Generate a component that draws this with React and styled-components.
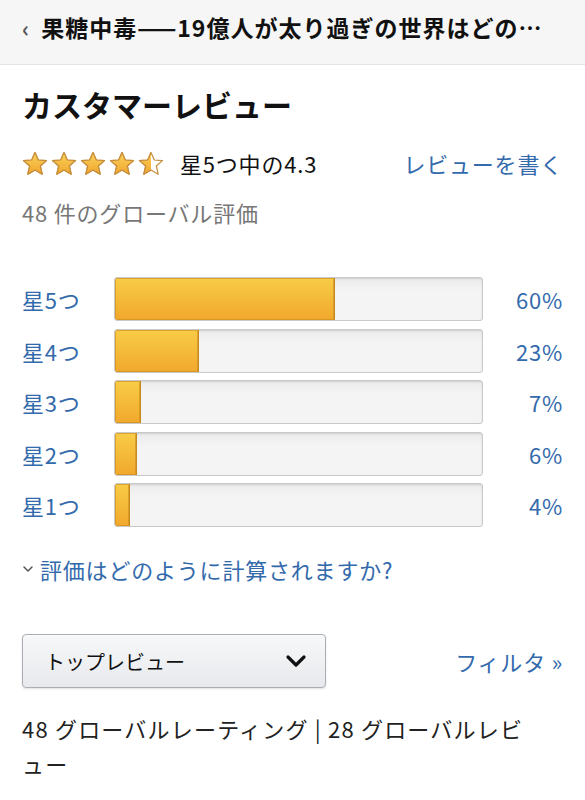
import React from 'react';
import styled, { createGlobalStyle } from 'styled-components';

const GlobalStyle = createGlobalStyle`
  html, body {
    margin: 0;
    padding: 0;
    background: #fff;
  }
  body {
    font-family: 'Noto Sans CJK JP', 'Noto Sans', sans-serif;
    color: #111;
  }
`;

const Page = styled.div`
  width: 585px;
  min-height: 800px;
  background: #fff;
`;

const TopBar = styled.div`
  height: 65px;
  display: flex;
  align-items: center;
  padding: 0 22px 10px;
  background: #f6f6f6;
  border-bottom: 1px solid #e3e3e3;
  box-sizing: border-box;
  gap: 12px;
`;

const Back = styled.span`
  font-size: 22px;
  color: #555;
  font-weight: 700;
  line-height: 1;
`;

const TopTitle = styled.div`
  font-size: 23px;
  font-weight: 700;
  letter-spacing: 1px;
  color: #111;
  white-space: nowrap;
`;

const Content = styled.div`
  padding: 16px 22px 0;
`;

const Heading = styled.h1`
  margin: 0;
  font-size: 30px;
  font-weight: 700;
  line-height: 46px;
  color: #111;
`;

const SummaryRow = styled.div`
  display: flex;
  align-items: center;
  justify-content: space-between;
  margin-top: 20px;
  height: 32px;
`;

const StarsWrap = styled.div`
  display: flex;
  align-items: center;
`;

const Stars = styled.div`
  display: flex;
  gap: 3px;
  margin-right: 16px;
`;

const Text = styled.span`
  font-size: 22px;
  letter-spacing: 0.8px;
  line-height: 30px;
`;

const Score = styled(Text)`
  color: #111;
`;

const Link = styled(Text)`
  color: #336aac;
  cursor: pointer;
`;

const Count = styled.div`
  font-size: 22px;
  letter-spacing: 0.8px;
  color: #777;
  margin-top: 18px;
  line-height: 30px;
`;

const Bars = styled.div`
  display: flex;
  flex-direction: column;
  gap: 7.5px;
  margin-top: 50px;
`;

const BarRow = styled.div`
  display: grid;
  grid-template-columns: 92px 369px 1fr;
  align-items: center;
  height: 44px;
`;

const BarLabel = styled(Text)`
  color: #336aac;
`;

const Track = styled.div`
  height: 44px;
  box-sizing: border-box;
  border: 1px solid #c9c9c9;
  border-radius: 3px;
  background: linear-gradient(#ebebeb, #f4f4f4 30%, #f4f4f4);
  box-shadow: inset 0 1px 2px rgba(0, 0, 0, 0.12);
  overflow: hidden;
`;

const Fill = styled.div`
  height: 100%;
  box-sizing: border-box;
  background: linear-gradient(#f8cc47, #f1a82d);
  border-right: 1px solid #c98a1c;
  box-shadow: inset 0 0 0 1px rgba(200, 138, 28, 0.6);
  border-radius: 2px 0 0 2px;
`;

const Percent = styled(Text)`
  color: #336aac;
  text-align: right;
`;

const HowLink = styled.div`
  display: flex;
  align-items: center;
  gap: 6px;
  margin-top: 27px;
  font-size: 22px;
  letter-spacing: 0.8px;
  line-height: 30px;
  color: #336aac;
`;

const Controls = styled.div`
  display: flex;
  align-items: center;
  justify-content: space-between;
  margin-top: 50px;
`;

const Select = styled.div`
  width: 304px;
  height: 54px;
  box-sizing: border-box;
  border: 1px solid #aaadb2;
  border-radius: 4px;
  background: linear-gradient(#f7f8fa, #e7e9ec);
  box-shadow: 0 1px 0 rgba(255, 255, 255, 0.6) inset, 0 1px 2px rgba(0, 0, 0, 0.12);
  display: flex;
  align-items: center;
  justify-content: space-between;
  padding: 0 17px 0 22px;
  font-size: 20px;
  color: #111;
`;

const Totals = styled.div`
  margin-top: 23px;
  font-size: 22px;
  letter-spacing: 1.2px;
  line-height: 35px;
  color: #222;
  max-width: 520px;
`;

function Star({ half, id }) {
  return (
    <svg width="26" height="25" viewBox="0 0 26 25">
      <defs>
        <linearGradient id={`g${id}`} x1="0" y1="0" x2="0" y2="1">
          <stop offset="0" stopColor="#fbd25a" />
          <stop offset="1" stopColor="#f0a62e" />
        </linearGradient>
        <clipPath id={`c${id}`}>
          <rect x="0" y="0" width="13" height="25" />
        </clipPath>
      </defs>
      <polygon
        points="13,1.5 16.3,9 24.5,9.6 18.3,15 20.2,23.2 13,18.9 5.8,23.2 7.7,15 1.5,9.6 9.7,9"
        fill="#fff"
        stroke="#c58d3d"
        strokeWidth="1.2"
        strokeLinejoin="round"
      />
      <polygon
        points="13,1.5 16.3,9 24.5,9.6 18.3,15 20.2,23.2 13,18.9 5.8,23.2 7.7,15 1.5,9.6 9.7,9"
        fill={`url(#g${id})`}
        stroke="#c58d3d"
        strokeWidth="1.2"
        strokeLinejoin="round"
        clipPath={half ? `url(#c${id})` : undefined}
      />
    </svg>
  );
}

function Chevron({ size = 22, stroke = 3, color = '#111' }) {
  return (
    <svg width={size} height={size} viewBox="0 0 24 24" fill="none">
      <path d="M4 8 L12 16 L20 8" stroke={color} strokeWidth={stroke} strokeLinecap="round" strokeLinejoin="round" />
    </svg>
  );
}

const ratings = [
  { label: '星5つ', pct: 60 },
  { label: '星4つ', pct: 23 },
  { label: '星3つ', pct: 7 },
  { label: '星2つ', pct: 6 },
  { label: '星1つ', pct: 4 },
];

export default function App() {
  return (
    <Page>
      <GlobalStyle />
      <TopBar>
        <Back>‹</Back>
        <TopTitle>果糖中毒——19億人が太り過ぎの世界はどの…</TopTitle>
      </TopBar>
      <Content>
        <Heading>カスタマーレビュー</Heading>
        <SummaryRow>
          <StarsWrap>
            <Stars>
              {[0, 1, 2, 3, 4].map((i) => (
                <Star key={i} id={i} half={i === 4} />
              ))}
            </Stars>
            <Score>星5つ中の4.3</Score>
          </StarsWrap>
          <Link>レビューを書く</Link>
        </SummaryRow>
        <Count>48 件のグローバル評価</Count>

        <Bars>
          {ratings.map((r) => (
            <BarRow key={r.label}>
              <BarLabel>{r.label}</BarLabel>
              <Track>
                <Fill style={{ width: `${r.pct}%` }} />
              </Track>
              <Percent>{r.pct}%</Percent>
            </BarRow>
          ))}
        </Bars>

        <HowLink>
          <Chevron size={12} stroke={3} color="#555" />
          評価はどのように計算されますか?
        </HowLink>

        <Controls>
          <Select>
            トップレビュー
            <Chevron size={24} stroke={3.2} />
          </Select>
          <Link>フィルタ »</Link>
        </Controls>

        <Totals>48 グローバルレーティング | 28 グローバルレビュー</Totals>
      </Content>
    </Page>
  );
}
